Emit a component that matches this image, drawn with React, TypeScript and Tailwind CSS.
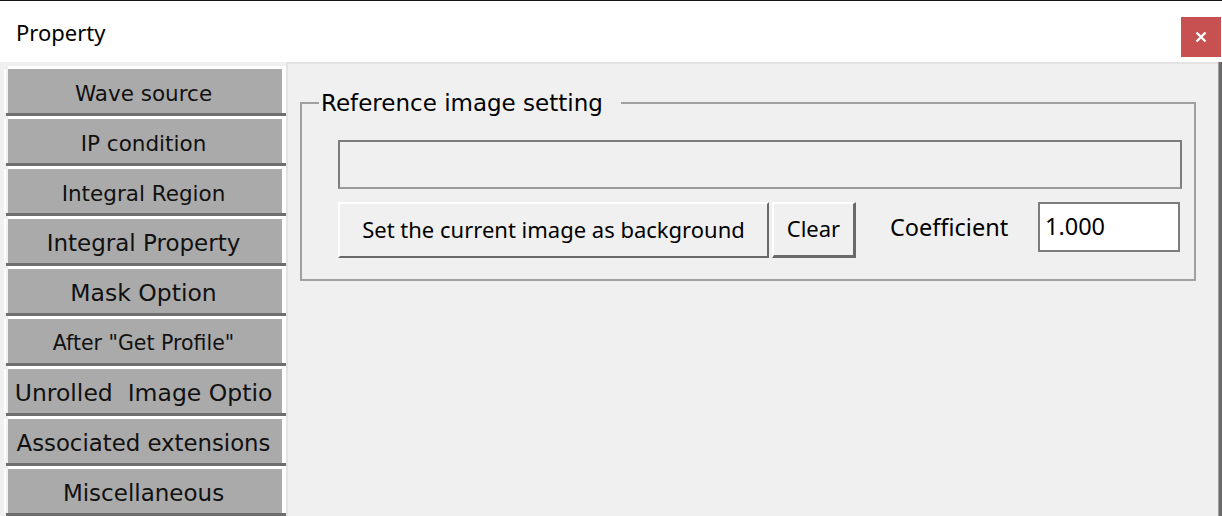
import React from "react";

const tabs: { label: string; size: string }[] = [
  { label: "Wave source", size: "text-[21.5px]" },
  { label: "IP condition", size: "text-[21.5px]" },
  { label: "Integral Region", size: "text-[21.5px]" },
  { label: "Integral Property", size: "text-[23px]" },
  { label: "Mask Option", size: "text-[23.5px]" },
  { label: 'After "Get Profile"', size: "text-[20.5px]" },
  { label: "Unrolled  Image Optio", size: "text-[23.5px]" },
  { label: "Associated extensions", size: "text-[22.8px]" },
  { label: "Miscellaneous", size: "text-[23px]" },
];

function SideTab({ label, size }: { label: string; size: string }) {
  return (
    <div className="flex h-[50px] flex-col pl-1">
      <div className="flex flex-1">
        <div className="mt-[3px] w-[2px] bg-white" />
        <div className="w-[2px]" />
        <div
          className={`flex flex-1 items-center justify-center overflow-hidden whitespace-pre border-t-[3px] border-white bg-[#aaaaaa] pr-[3px] pt-[5px] leading-none text-[#111] [font-family:'DejaVu_Sans',sans-serif] ${size}`}
        >
          {label}
        </div>
        <div className="w-1 bg-white" />
      </div>
      <div className="ml-[2px] h-[3px] bg-[#6e6e6e]" />
    </div>
  );
}

function CloseButton() {
  return (
    <button
      type="button"
      aria-label="Close"
      className="mr-[1px] mt-[16px] flex h-[40px] w-[40px] items-center justify-center self-start bg-[#c75050]"
    >
      <svg width="12" height="12" viewBox="0 0 12 12">
        <path d="M1.5 1.5 L10.5 10.5 M10.5 1.5 L1.5 10.5" stroke="#fff" strokeWidth="2.4" />
      </svg>
    </button>
  );
}

export default function App() {
  return (
    <div className="flex h-[516px] w-[1222px] flex-col overflow-hidden bg-white [font-family:'Noto_Sans',sans-serif]">
      <div className="h-px bg-[#141414]" />
      {/* title bar */}
      <div className="flex h-[61px] items-stretch justify-between bg-white">
        <div className="flex items-center pl-4 pt-[2px] text-[22px] text-black">Property</div>
        <CloseButton />
      </div>
      <div className="flex flex-1 overflow-hidden bg-[#f0f0f0]">
        {/* left tab list */}
        <div className="w-[286px] shrink-0 pt-1">
          {tabs.map((t) => (
            <SideTab key={t.label} label={t.label} size={t.size} />
          ))}
        </div>
        {/* property page */}
        <div className="flex flex-1 flex-col border-l-2 border-t-2 border-[#e3e3e3]">
          <fieldset className="ml-3 mr-[22px] mt-[27px] border-2 border-[#a0a0a0] p-0">
            <legend className="ml-[17px] pl-[2px] pr-[18px] text-[23px] leading-[24px] text-black [font-family:'DejaVu_Sans',sans-serif]">
              Reference image setting
            </legend>
            <div className="pb-[21px] pl-9 pr-3 pt-[25px]">
              <div className="h-[49px] border-2 border-[#7d7d7d] border-b-[#9a9a9a]" />
              <div className="mt-[13px] flex items-start pr-[2px]">
                <button
                  type="button"
                  className="flex h-[56px] w-[431px] items-center justify-center border-2 border-white border-b-[#696969] border-r-[#696969] pb-[2px] text-[22px] text-black"
                >
                  Set the current image as background
                </button>
                <button
                  type="button"
                  className="ml-[3px] flex h-[56px] w-[84px] items-center justify-center border-2 border-white border-b-[3px] border-b-[#696969] border-r-[3px] border-r-[#696969] pb-[2px] text-[22px] text-black"
                >
                  Clear
                </button>
                <span className="ml-[34px] mt-[8px] text-[23.5px] text-black">Coefficient</span>
                <div className="ml-auto flex h-[50px] w-[142px] items-center border-2 border-[#7d7d7d] bg-white pl-[5px] text-[23.5px] text-black">
                  1.000
                </div>
              </div>
            </div>
          </fieldset>
        </div>
        {/* right frame edge */}
        <div className="w-1 shrink-0 border-l border-[#a0a0a0] bg-[#6b6b6b]" />
      </div>
    </div>
  );
}
